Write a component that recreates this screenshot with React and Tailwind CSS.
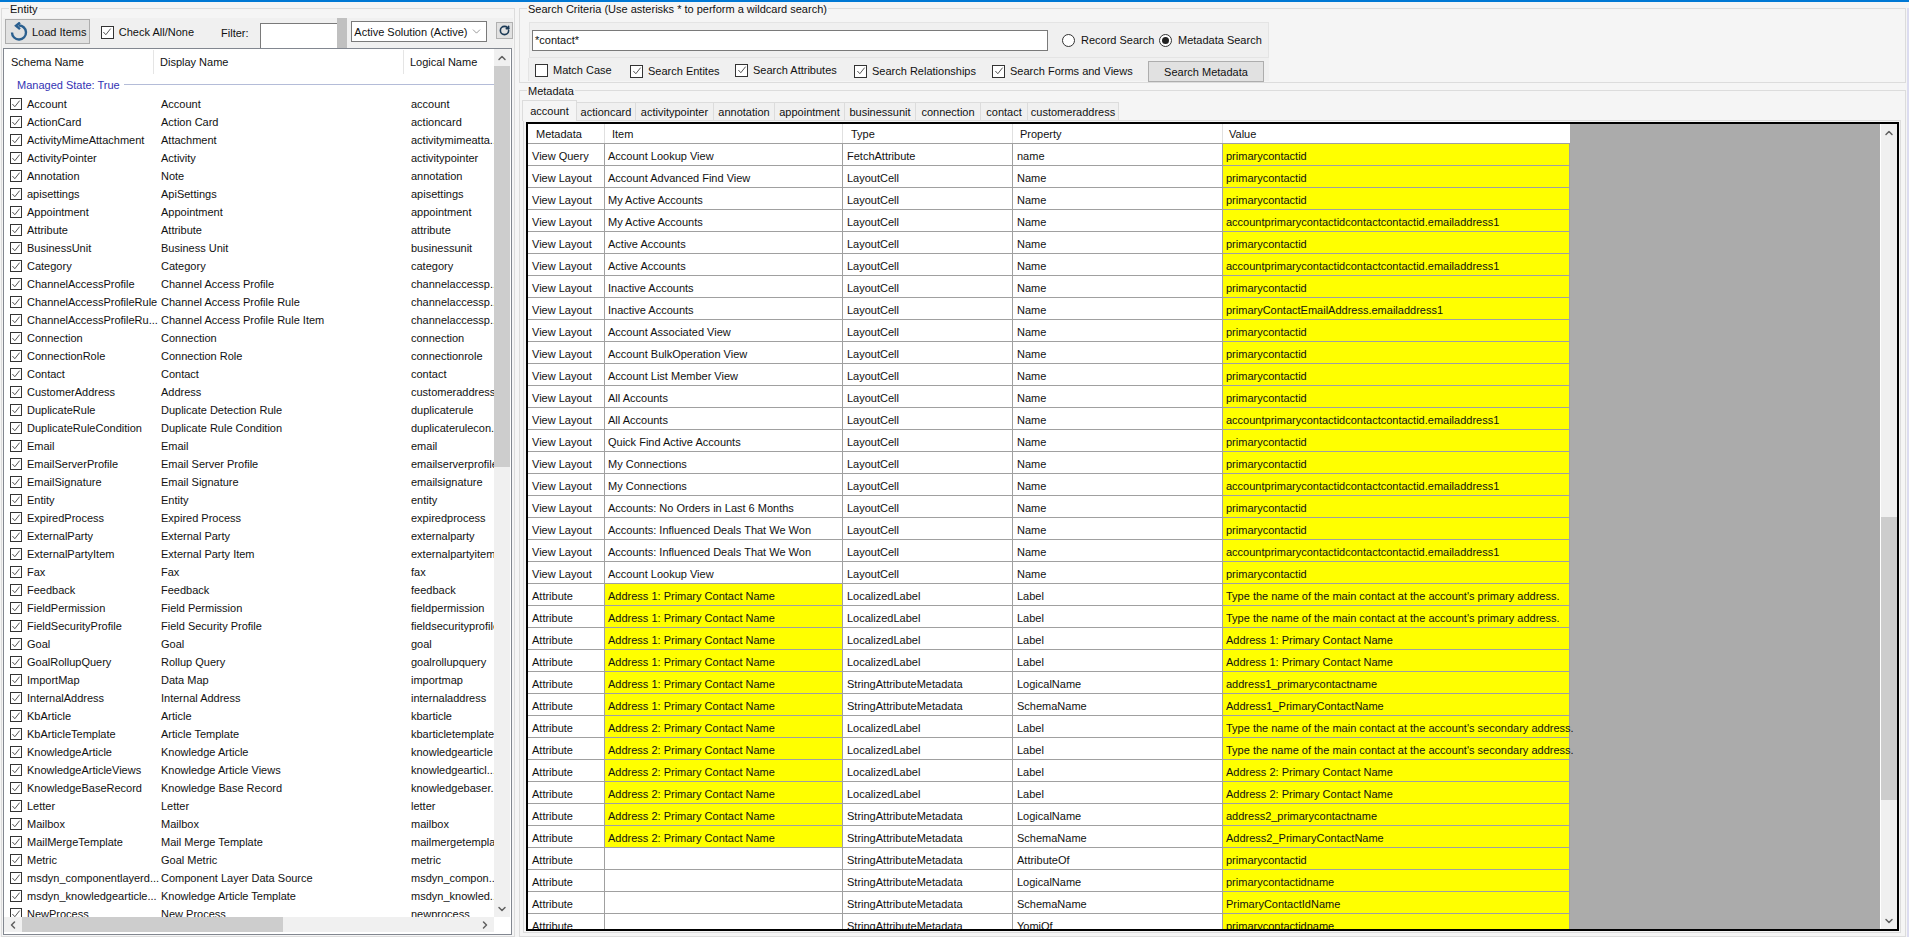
import { ChevronDown, ChevronLeft, ChevronRight, ChevronUp, RotateCw } from 'lucide-react'

const ENTITIES = [
  ['Account', 'Account', 'account'],
  ['ActionCard', 'Action Card', 'actioncard'],
  ['ActivityMimeAttachment', 'Attachment', 'activitymimeatta..'],
  ['ActivityPointer', 'Activity', 'activitypointer'],
  ['Annotation', 'Note', 'annotation'],
  ['apisettings', 'ApiSettings', 'apisettings'],
  ['Appointment', 'Appointment', 'appointment'],
  ['Attribute', 'Attribute', 'attribute'],
  ['BusinessUnit', 'Business Unit', 'businessunit'],
  ['Category', 'Category', 'category'],
  ['ChannelAccessProfile', 'Channel Access Profile', 'channelaccessp...'],
  ['ChannelAccessProfileRule', 'Channel Access Profile Rule', 'channelaccessp...'],
  ['ChannelAccessProfileRu...', 'Channel Access Profile Rule Item', 'channelaccessp...'],
  ['Connection', 'Connection', 'connection'],
  ['ConnectionRole', 'Connection Role', 'connectionrole'],
  ['Contact', 'Contact', 'contact'],
  ['CustomerAddress', 'Address', 'customeraddress'],
  ['DuplicateRule', 'Duplicate Detection Rule', 'duplicaterule'],
  ['DuplicateRuleCondition', 'Duplicate Rule Condition', 'duplicaterulecon..'],
  ['Email', 'Email', 'email'],
  ['EmailServerProfile', 'Email Server Profile', 'emailserverprofile'],
  ['EmailSignature', 'Email Signature', 'emailsignature'],
  ['Entity', 'Entity', 'entity'],
  ['ExpiredProcess', 'Expired Process', 'expiredprocess'],
  ['ExternalParty', 'External Party', 'externalparty'],
  ['ExternalPartyItem', 'External Party Item', 'externalpartyitem'],
  ['Fax', 'Fax', 'fax'],
  ['Feedback', 'Feedback', 'feedback'],
  ['FieldPermission', 'Field Permission', 'fieldpermission'],
  ['FieldSecurityProfile', 'Field Security Profile', 'fieldsecurityprofile'],
  ['Goal', 'Goal', 'goal'],
  ['GoalRollupQuery', 'Rollup Query', 'goalrollupquery'],
  ['ImportMap', 'Data Map', 'importmap'],
  ['InternalAddress', 'Internal Address', 'internaladdress'],
  ['KbArticle', 'Article', 'kbarticle'],
  ['KbArticleTemplate', 'Article Template', 'kbarticletemplate'],
  ['KnowledgeArticle', 'Knowledge Article', 'knowledgearticle'],
  ['KnowledgeArticleViews', 'Knowledge Article Views', 'knowledgearticl...'],
  ['KnowledgeBaseRecord', 'Knowledge Base Record', 'knowledgebaser..'],
  ['Letter', 'Letter', 'letter'],
  ['Mailbox', 'Mailbox', 'mailbox'],
  ['MailMergeTemplate', 'Mail Merge Template', 'mailmergetemplate'],
  ['Metric', 'Goal Metric', 'metric'],
  ['msdyn_componentlayerd...', 'Component Layer Data Source', 'msdyn_compon...'],
  ['msdyn_knowledgearticle...', 'Knowledge Article Template', 'msdyn_knowled..'],
  ['NewProcess', 'New Process', 'newprocess'],
]

const EMAIL = 'accountprimarycontactidcontactcontactid.emailaddress1'
const ID = 'primarycontactid'
const A1 = 'Address 1: Primary Contact Name'
const A2 = 'Address 2: Primary Contact Name'
const A1_DESC = "Type the name of the main contact at the account's primary address."
const A2_DESC = "Type the name of the main contact at the account's secondary address."

const ROWS = [
  ['View Query', 'Account Lookup View', 'FetchAttribute', 'name', ID],
  ['View Layout', 'Account Advanced Find View', 'LayoutCell', 'Name', ID],
  ['View Layout', 'My Active Accounts', 'LayoutCell', 'Name', ID],
  ['View Layout', 'My Active Accounts', 'LayoutCell', 'Name', EMAIL],
  ['View Layout', 'Active Accounts', 'LayoutCell', 'Name', ID],
  ['View Layout', 'Active Accounts', 'LayoutCell', 'Name', EMAIL],
  ['View Layout', 'Inactive Accounts', 'LayoutCell', 'Name', ID],
  ['View Layout', 'Inactive Accounts', 'LayoutCell', 'Name', 'primaryContactEmailAddress.emailaddress1'],
  ['View Layout', 'Account Associated View', 'LayoutCell', 'Name', ID],
  ['View Layout', 'Account BulkOperation View', 'LayoutCell', 'Name', ID],
  ['View Layout', 'Account List Member View', 'LayoutCell', 'Name', ID],
  ['View Layout', 'All Accounts', 'LayoutCell', 'Name', ID],
  ['View Layout', 'All Accounts', 'LayoutCell', 'Name', EMAIL],
  ['View Layout', 'Quick Find Active Accounts', 'LayoutCell', 'Name', ID],
  ['View Layout', 'My Connections', 'LayoutCell', 'Name', ID],
  ['View Layout', 'My Connections', 'LayoutCell', 'Name', EMAIL],
  ['View Layout', 'Accounts: No Orders in Last 6 Months', 'LayoutCell', 'Name', ID],
  ['View Layout', 'Accounts: Influenced Deals That We Won', 'LayoutCell', 'Name', ID],
  ['View Layout', 'Accounts: Influenced Deals That We Won', 'LayoutCell', 'Name', EMAIL],
  ['View Layout', 'Account Lookup View', 'LayoutCell', 'Name', ID],
  ['Attribute', A1, 'LocalizedLabel', 'Label', A1_DESC, true],
  ['Attribute', A1, 'LocalizedLabel', 'Label', A1_DESC, true],
  ['Attribute', A1, 'LocalizedLabel', 'Label', A1, true],
  ['Attribute', A1, 'LocalizedLabel', 'Label', A1, true],
  ['Attribute', A1, 'StringAttributeMetadata', 'LogicalName', 'address1_primarycontactname', true],
  ['Attribute', A1, 'StringAttributeMetadata', 'SchemaName', 'Address1_PrimaryContactName', true],
  ['Attribute', A2, 'LocalizedLabel', 'Label', A2_DESC, true],
  ['Attribute', A2, 'LocalizedLabel', 'Label', A2_DESC, true],
  ['Attribute', A2, 'LocalizedLabel', 'Label', A2, true],
  ['Attribute', A2, 'LocalizedLabel', 'Label', A2, true],
  ['Attribute', A2, 'StringAttributeMetadata', 'LogicalName', 'address2_primarycontactname', true],
  ['Attribute', A2, 'StringAttributeMetadata', 'SchemaName', 'Address2_PrimaryContactName', true],
  ['Attribute', '', 'StringAttributeMetadata', 'AttributeOf', ID],
  ['Attribute', '', 'StringAttributeMetadata', 'LogicalName', 'primarycontactidname'],
  ['Attribute', '', 'StringAttributeMetadata', 'SchemaName', 'PrimaryContactIdName'],
  ['Attribute', '', 'StringAttributeMetadata', 'YomiOf', 'primarycontactidname'],
]

const TABS = [
  ['actioncard', 'w-[59px]'],
  ['activitypointer', 'w-[78px]'],
  ['annotation', 'w-[61px]'],
  ['appointment', 'w-[70px]'],
  ['businessunit', 'w-[71px]'],
  ['connection', 'w-[65px]'],
  ['contact', 'w-[47px]'],
  ['customeraddress', 'w-[91px]'],
]

function Check({ size = 'h-[13px] w-[13px]' }) {
  return (
    <span className={`flex shrink-0 items-center justify-center border border-[#333] bg-white ${size}`}>
      <svg viewBox="0 0 11 11" className="h-[10px] w-[10px]" fill="none" stroke="#444" strokeWidth="1">
        <path d="M1.5 5.5 L4.2 8.5 L9.5 1.8" />
      </svg>
    </span>
  )
}

function Labeled({ children, off, className = '' }) {
  return (
    <div className={`flex items-center gap-[5px] whitespace-nowrap ${className}`}>
      {off ? <span className="h-[13px] w-[13px] shrink-0 border border-[#333] bg-white" /> : <Check />}
      <span>{children}</span>
    </div>
  )
}

function Radio({ on, children, className = '' }) {
  return (
    <div className={`flex items-center gap-[6px] whitespace-nowrap ${className}`}>
      <span className="flex h-[13px] w-[13px] shrink-0 items-center justify-center rounded-full border border-[#333] bg-white">
        {on && <span className="h-[7px] w-[7px] rounded-full bg-[#222]" />}
      </span>
      <span>{children}</span>
    </div>
  )
}

function GroupLabel({ children }) {
  return <span className="absolute left-[7px] top-[-6px] bg-[#f5f5f5] px-[1px] leading-[12px]">{children}</span>
}

function EntityList() {
  return (
    <div className="flex h-[887px] w-[509px] flex-col border border-[#828790] bg-white">
      <div className="flex h-[868px] w-[506px]">
        <div className="w-[490px] overflow-hidden">
          <div className="mt-[1px] flex h-[24px] items-center">
            <div className="flex h-full w-[150px] items-center border-r border-[#e5e5e5] pl-[7px]">Schema Name</div>
            <div className="flex h-full w-[250px] items-center border-r border-[#e5e5e5] pl-[6px]">Display Name</div>
            <div className="pl-[6px]">Logical Name</div>
          </div>
          <div className="flex h-[21px] items-center pl-[13px]">
            <span className="pr-[4px] text-[#3333b4]">Managed State: True</span>
            <span className="h-px flex-1 bg-[#b4bcd8]" />
          </div>
          {ENTITIES.map(([schema, display, logical]) => (
            <div key={schema + display} className="flex h-[18px] items-center whitespace-nowrap">
              <div className="flex w-[150px] items-center gap-[5px] pl-[6px]">
                <Check size="h-[12px] w-[12px]" />
                <span>{schema}</span>
              </div>
              <div className="w-[250px] pl-[7px]">{display}</div>
              <div className="w-[90px] overflow-hidden pl-[7px]">{logical}</div>
            </div>
          ))}
        </div>
        <div className="flex w-[16px] flex-col bg-[#f0f0f0]">
          <div className="flex h-[17px] items-center justify-center"><ChevronUp size={12} strokeWidth={3} color="#606060" /></div>
          <div className="h-[401px] bg-[#cdcdcd]" />
          <div className="flex-1" />
          <div className="flex h-[17px] items-center justify-center"><ChevronDown size={12} strokeWidth={3} color="#606060" /></div>
        </div>
      </div>
      <div className="flex h-[15px] w-[490px] items-center bg-[#f0f0f0]">
        <div className="flex w-[18px] justify-center"><ChevronLeft size={12} strokeWidth={3} color="#606060" /></div>
        <div className="h-full w-[261px] bg-[#cdcdcd]" />
        <div className="flex-1" />
        <div className="flex w-[18px] justify-center"><ChevronRight size={12} strokeWidth={3} color="#606060" /></div>
      </div>
    </div>
  )
}

function Toolbar() {
  return (
    <div className="flex h-[30px] w-[510px] items-start whitespace-nowrap bg-[#f0f0f0]">
      <button className="ml-[2px] mt-[1px] flex h-[25px] w-[85px] items-center border border-[#adadad] bg-[#e1e1e1] pl-[3px]">
        <svg viewBox="0 0 20 20" className="h-[20px] w-[20px]" fill="none" stroke="#2a5f8f" strokeWidth="2.4">
          <path d="M9.5 3.5 A7 7 0 1 1 3 10.5" />
          <path d="M11 0.5 L7 3.7 L11 7.2" />
        </svg>
        <span className="ml-[3px]">Load Items</span>
      </button>
      <Labeled className="ml-[11px] mt-[6px]">Check All/None</Labeled>
      <span className="ml-[27px] mt-[7px]">Filter:</span>
      <div className="ml-[11px] mt-[5px] h-[25px] w-[78px] border-l border-t border-[#7a7a7a] bg-white" />
      <div className="h-[30px] w-[10px] bg-[#c0c0c0]" />
      <div className="ml-[4px] mt-[3px] flex h-[21px] w-[136px] items-center justify-between border border-[#7a7a7a] bg-white pl-[2px] pr-[3px]">
        <span>Active Solution (Active)</span>
        <ChevronDown size={13} strokeWidth={1} color="#444" />
      </div>
      <button className="ml-[9px] mt-[4px] flex h-[17px] w-[17px] items-center justify-center border border-[#b0b0b0] bg-[#e1e1e1]">
        <RotateCw size={11} strokeWidth={3.5} color="#1c3a56" />
      </button>
    </div>
  )
}

function SearchGroup() {
  return (
    <div className="relative h-[75px] w-[1387px] border border-[#dcdcdc] pl-[8px] pt-[13px]">
      <GroupLabel>Search Criteria (Use asterisks * to perform a wildcard search)</GroupLabel>
      <div className="ml-[1px] flex h-[36px] w-[740px] items-center border border-[#e4e4e4] bg-[#f0f0f0] pl-[2px]">
        <div className="flex h-[21px] w-[516px] items-center border border-[#7a7a7a] bg-white pl-[2px]">*contact*</div>
        <Radio className="ml-[14px]">Record Search</Radio>
        <Radio on className="absolute left-[639px]">Metadata Search</Radio>
      </div>
      <div className="flex h-[23px] w-[741px] items-start whitespace-nowrap border-l border-[#e4e4e4] bg-[#f0f0f0] pl-[6px]">
        <Labeled off className="mt-[4px] w-[95px]">Match Case</Labeled>
        <Labeled className="mt-[5px] w-[105px]">Search Entites</Labeled>
        <Labeled className="mt-[4px] w-[119px]">Search Attributes</Labeled>
        <Labeled className="mt-[5px] w-[138px]">Search Relationships</Labeled>
        <Labeled className="mt-[5px] w-[156px]">Search Forms and Views</Labeled>
        <button className="mt-[3px] h-[21px] w-[116px] border border-[#adadad] bg-[#e1e1e1]">Search Metadata</button>
      </div>
    </div>
  )
}

function Tabs() {
  return (
    <div className="flex h-[20px] items-end pl-[2px]">
      <div className="z-10 mb-[-1px] flex h-[21px] w-[55px] items-center justify-center border border-b-0 border-[#dcdcdc] bg-[#f5f5f5]">account</div>
      {TABS.map(([name, width]) => (
        <div key={name} className={`flex h-[18px] items-center justify-center border-r border-t border-[#dcdcdc] bg-[#f0f0f0] ${width}`}>{name}</div>
      ))}
    </div>
  )
}

function ResultsTable() {
  return (
    <div className="ml-[2px] mt-[1px] flex h-[809px] w-[1373px] border-2 border-black bg-[#ababab]">
      <div className="w-[1352px] overflow-hidden">
        <div className="flex h-[20px] w-[1042px] border-b border-[#a0a0a0] bg-white">
          <div className="flex w-[77px] items-center border-r border-[#e0e0e0] pl-[8px]">Metadata</div>
          <div className="flex w-[238px] items-center border-r border-[#e0e0e0] pl-[7px]">Item</div>
          <div className="flex w-[170px] items-center border-r border-[#e0e0e0] pl-[8px]">Type</div>
          <div className="flex w-[210px] items-center border-r border-[#e0e0e0] pl-[7px]">Property</div>
          <div className="flex w-[347px] items-center pl-[6px]">Value</div>
        </div>
        {ROWS.map(([meta, item, type, property, value, hit], i) => (
          <div key={i} className="flex h-[22px] w-[1042px] whitespace-nowrap pt-0">
            <div className="flex w-[77px] items-center border-b border-r border-[#a0a0a0] bg-white pl-[4px] pt-[2px]">{meta}</div>
            <div className={`flex w-[238px] items-center border-b border-r border-[#a0a0a0] pl-[3px] pt-[2px] ${hit ? 'bg-[#ffff00]' : 'bg-white'}`}>{item}</div>
            <div className="flex w-[170px] items-center border-b border-r border-[#a0a0a0] bg-white pl-[4px] pt-[2px]">{type}</div>
            <div className="flex w-[210px] items-center border-b border-r border-[#a0a0a0] bg-white pl-[4px] pt-[2px]">{property}</div>
            <div className="flex w-[347px] items-center border-b border-r border-[#a0a0a0] bg-[#ffff00] pl-[3px] pt-[2px]">{value}</div>
          </div>
        ))}
      </div>
      <div className="flex w-[17px] flex-col border-l border-white bg-[#f0f0f0]">
        <div className="flex h-[17px] items-center justify-center"><ChevronUp size={12} strokeWidth={3} color="#606060" /></div>
        <div className="mt-[376px] h-[283px] bg-[#cdcdcd]" />
        <div className="flex-1" />
        <div className="flex h-[17px] items-center justify-center"><ChevronDown size={12} strokeWidth={3} color="#606060" /></div>
      </div>
    </div>
  )
}

export default function App() {
  return (
    <div className="flex h-[937px] w-[1909px] flex-col overflow-hidden bg-[#f5f5f5] font-['Liberation_Sans',sans-serif] text-[11px] leading-[16px] text-[#111]">
      <div className="h-[2px] shrink-0 bg-[#0078d4]" />
      <div className="flex pl-[1px] pt-[6px]">
        <div className="relative h-[929px] w-[514px] border border-[#dcdcdc] pl-[1px] pt-[9px]">
          <GroupLabel>Entity</GroupLabel>
          <Toolbar />
          <EntityList />
        </div>
        <div className="ml-[4px] flex flex-col">
          <SearchGroup />
          <div className="relative mt-[7px] h-[847px] w-[1387px] border border-[#dcdcdc] pt-[9px]">
            <GroupLabel>Metadata</GroupLabel>
            <Tabs />
            <div className="ml-[3px] h-[813px] w-[1378px] border border-[#dcdcdc] bg-[#f5f5f5]">
              <ResultsTable />
            </div>
          </div>
        </div>
        <div className="ml-[1px] h-[929px] w-[2px] bg-[#dcdcf0]" />
      </div>
    </div>
  )
}
